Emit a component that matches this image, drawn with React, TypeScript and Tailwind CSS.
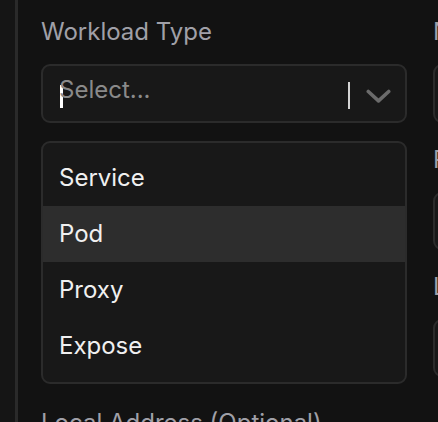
const options = ["Service", "Pod", "Proxy", "Expose"];

export default function App() {
  return (
    <div
      className="flex h-[422px] w-[438px] overflow-hidden bg-[#121212] text-[24px]"
      style={{ fontFamily: "Inter, 'Noto Sans', sans-serif" }}
    >
      <div className="w-[15px] shrink-0 bg-[#151515]" />
      <div className="w-[3px] shrink-0 bg-[#2a2a2a]" />

      <div className="flex shrink-0 gap-[26px] pl-[23px] pt-[18px]">
        {/* left column */}
        <div className="w-[366px] shrink-0">
          <label className="block leading-[28px] text-[#a0a0a8]">Workload Type</label>
          <div className="mt-[18px] flex h-[59px] items-center rounded-[9px] border-2 border-[#2b2b2b] bg-[#181818] pl-[16px] pr-[14px]">
            <div className="relative h-[28px] flex-1">
              <span className="absolute left-[1px] top-[5px] h-[23px] w-[3px] bg-white" />
              <span className="absolute left-0 top-[-4px] leading-[28px] text-[#8a8a8a]">Select...</span>
            </div>
            <div className="relative top-[2px] h-[27px] w-[2px] bg-[#d4d4d4]" />
            <svg width="25" height="16" viewBox="0 0 25 16" className="relative top-[3px] ml-[16px]" fill="none">
              <path d="M2.3 2.5 L12.5 11.8 L22.7 2.5" stroke="#6b6b6b" strokeWidth="3.6" strokeLinecap="round" strokeLinejoin="round" />
            </svg>
          </div>

          <div className="mt-[18px] rounded-[9px] border-2 border-[#2b2b2b] bg-[#181818] pb-[8px] pt-[7px]">
            {options.map((o) => (
              <div
                key={o}
                className={`flex h-[56px] items-center px-[16px] text-[#f0f0f0] ${o === "Pod" ? "bg-[#2d2d2d]" : ""}`}
              >
                {o}
              </div>
            ))}
          </div>

          <label className="mt-[25px] block leading-[28px] text-[#a0a0a8]">Local Address (Optional)</label>
        </div>

        {/* right column (mostly off screen) */}
        <div className="w-[366px] shrink-0">
          <label className="block leading-[28px] text-[#a0a0a8]">Name</label>
          <div className="mt-[18px] h-[59px] rounded-[9px] border-2 border-[#2b2b2b] bg-[#181818]" />
          <label className="mt-[23px] block leading-[28px] text-[#a0a0a8]">Port</label>
          <div className="mt-[18px] h-[58px] rounded-[9px] border-2 border-[#2b2b2b] bg-[#181818]" />
          <label className="mt-[23px] block leading-[28px] text-[#a0a0a8]">Local Port</label>
          <div className="mt-[18px] h-[58px] rounded-[9px] border-2 border-[#2b2b2b] bg-[#181818]" />
        </div>
      </div>
    </div>
  );
}
